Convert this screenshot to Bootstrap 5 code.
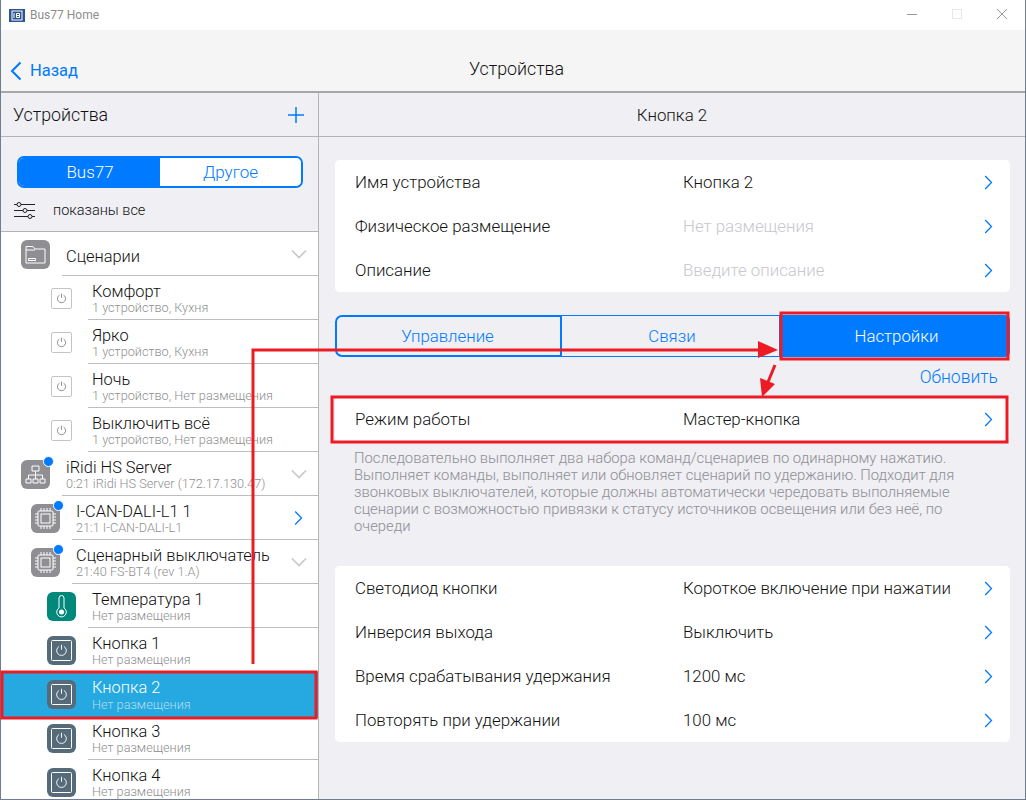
<!DOCTYPE html>
<html lang="ru">
<head>
    <meta charset="UTF-8">
    <title>Bus77 Home</title>
    <link rel="stylesheet" href="https://cdn.jsdelivr.net/npm/bootstrap@5.3.0/dist/css/bootstrap.min.css">
    <style>
        html, body { height: 800px; overflow: hidden; }
        body { font-family: Roboto, "Liberation Sans", sans-serif; font-weight: 300; color: #111; background: #efeff4; }
        .app-window { position: relative; height: 800px; border-left: 1px solid #6f7c91; border-right: 1px solid #6f7c91; border-bottom: 1px solid #6f7c91; }
        .title-bar { height: 30px; background: #fff; color: #8d8d8d; font-size: 12px; font-weight: 400; }
        .logo-box { width: 16px; height: 13px; margin-left: 8px; margin-right: 5px; margin-top: 1px; }
        .win-btns { margin-left: auto; padding-right: 17px; column-gap: 33px; }
        .win-btns svg { display: block; }
        .top-nav { height: 63px; background: #f5f5f5; border-bottom: 2px solid #a6a6a6; position: relative; font-size: 16.5px; font-weight: 400; }
        .back-link { color: #007aff; position: absolute; left: 9px; top: 29px; text-decoration: none; }
        .top-title { position: absolute; left: 7px; right: 0; top: 27px; text-align: center; font-size: 17.8px; font-weight: 300; line-height: 24px; }
        .side-pane { width: 318px; flex: none; border-right: 1px solid #b4b4b4; height: 706px; overflow: hidden; }
        .pane-head { height: 44px; border-bottom: 1px solid #b4b4b4; font-size: 17.8px; font-weight: 300; padding: 1px 14px 0 12px; }
        .seg-wrap { padding: 19px 15px 0 16px; }
        .seg-group { height: 32px; border: 2px solid #007aff; border-radius: 7px; overflow: hidden; background: #fff; }
        .seg-group .btn { border: 0; border-radius: 0; padding: 2px 0 0; font-size: 17px; font-weight: 300; color: #007aff; background: #fff; }
        .seg-group .btn.is-on { background: #007aff; color: #fff; flex: 0 0 142px; }
        .filter-row { height: 44px; border-bottom: 1px solid #b4b4b4; font-size: 14.5px; font-weight: 300; padding-left: 13px; padding-top: 2px; }
        .filter-row span { margin-left: 17px; }
        .tree { background: #fff; height: 567px; overflow: hidden; }
        .tree-row { height: 44px; position: relative; display: flex; align-items: center; }
        .tree-row .row-text { flex: 1; height: 44px; border-bottom: 1px solid #bdbdbd; padding-top: 4px; display: flex; flex-direction: column; justify-content: center; line-height: 1; }
        .row-name { font-size: 16.4px; font-weight: 300; }
        .row-name.is-lone { margin-top: 4px; }
        .row-sub { font-size: 12.7px; font-weight: 300; color: #8f8f8f; margin-top: 2px; }
        .lvl-0 { padding-left: 20px; }
        .lvl-0 .row-text { margin-left: 12px; padding-left: 4px; }
        .lvl-1 { padding-left: 30px; }
        .lvl-1 .row-text { margin-left: 12px; padding-left: 4px; }
        .lvl-2 { padding-left: 46px; }
        .lvl-2 .row-text { margin-left: 12px; padding-left: 4px; }
        .lvl-s { padding-left: 50px; }
        .lvl-s .row-text { margin-left: 16px; padding-left: 4px; }
        .tile { width: 29px; height: 29px; border-radius: 6px; background: #8e8e93; flex: none; position: relative; display: flex; align-items: center; justify-content: center; }
        .tile-teal { background: #00897b; }
        .tile-slate { background: #566b7a; }
        .tile-blank { width: 21px; height: 21px; border-radius: 2px; background: #fff; border: 1px solid #c4c4c4; }
        .dot-new { position: absolute; top: -4px; right: -4px; width: 9px; height: 9px; border-radius: 50%; background: #007aff; border: 1px solid #fff; box-sizing: content-box; }
        .chev-end { position: absolute; right: 11px; top: 50%; transform: translateY(-50%); }
        .tree-row.is-picked { background: #25a9e0; box-shadow: 0 2px 0 #25a9e0; z-index: 1; }
        .tree-row.is-picked .row-text { border-bottom: 0; }
        .tree-row.is-picked .row-name { color: #fff; }
        .tree-row.is-picked .row-sub { color: #b5dcef; }
        .main-pane { flex: 1; height: 706px; overflow: hidden; }
        .main-head { height: 44px; border-bottom: 1px solid #b4b4b4; font-size: 16.9px; font-weight: 300; padding-top: 3px; background: #efeff4; }
        .main-body { padding: 23px 15px 0 16px; }
        .set-list { border-radius: 5px; overflow: hidden; background: #fff; }
        .set-row { height: 44px; padding: 2px 0 0 20px; display: flex; align-items: center; font-size: 16.85px; font-weight: 300; position: relative; background: #fff; }
        .set-label { flex: 0 0 328px; }
        .set-value.is-empty { color: #c7c7cc; }
        .set-row svg { position: absolute; right: 17px; top: 15px; }
        .tab-group { margin-top: 23px; height: 42px; }
        .tab-group .btn { border-radius: 0; padding: 2px 0 0; font-size: 16.8px; font-weight: 300; color: #007aff; background: transparent; border: 1px solid #007aff; }
        .tab-group .tab-a { flex: 0 0 227px; border: 2px solid #007aff; border-radius: 7px 0 0 7px; padding-right: 2px; }
        .tab-group .tab-b { flex: 0 0 219px; border-left: 0; padding-left: 4px; }
        .tab-group .tab-c { flex: 1; background: #007aff; color: #fff; border-radius: 0 5px 5px 0; padding-left: 4px; }
        .refresh-row { height: 40px; text-align: right; padding: 9px 12px 0 0; color: #007aff; font-size: 17.5px; font-weight: 300; line-height: 22px; }
        .hint-text { margin: 9px 15px 0 19px; font-size: 14.8px; line-height: 17px; color: #8e8e93; height: 116px; font-weight: 300; }
        .marks { position: absolute; left: -1px; top: 0; width: 1026px; height: 800px; pointer-events: none; z-index: 5; }
    </style>
</head>
<body>
    <svg width="0" height="0" class="position-absolute">
        <defs>
            <symbol id="i-power" viewBox="0 0 14 14"><path d="M4.4 2.6a5.2 5.2 0 1 0 5.2 0M7 .8v5.4" fill="none" stroke="currentColor" stroke-width="1"/></symbol>
            <symbol id="i-down" viewBox="0 0 16 10"><path d="M1 1.500l7 7 7-7" fill="none" stroke="#c7c7cc" stroke-width="1.600"/></symbol>
            <symbol id="i-right" viewBox="0 0 9 15"><path d="M1.200 1l6.300 6.500-6.300 6.500" fill="none" stroke="#007aff" stroke-width="1.300"/></symbol>
            <symbol id="i-chip" viewBox="0 0 29 29"><g fill="none" stroke="#fff"><rect x="7" y="7" width="15" height="15" rx="1"/><rect x="10" y="10" width="9" height="9"/><path d="M10 4v3M13 4v3M16 4v3M19 4v3M10 22v3M13 22v3M16 22v3M19 22v3M4 10h3M4 13h3M4 16h3M4 19h3M22 10h3M22 13h3M22 16h3M22 19h3"/></g></symbol>
        </defs>
    </svg>

    <div class="app-window">
        <div class="title-bar d-flex align-items-center">
            <svg class="logo-box" viewBox="0 0 16 13"><rect width="16" height="13" fill="#2c5490"/><rect x="3" y="2" width="10" height="9" fill="none" stroke="#fff"/><path d="M5 4v5M7.500 4.500h3v4h-3zM7.500 6.500h3" fill="none" stroke="#fff"/></svg>
            <span>Bus77 Home</span>
            <div class="win-btns d-flex align-items-center">
                <svg width="12" height="12"><path d="M1 5.500h10" stroke="#999"/></svg>
                <svg width="12" height="12"><rect x="1.500" y=".5" width="9" height="9" fill="none" stroke="#e8e8e8"/></svg>
                <svg width="12" height="12"><path d="M1 0l10 10M11 0L1 10" stroke="#999"/></svg>
            </div>
        </div>
        <div class="top-nav">
            <a class="back-link d-flex align-items-center gap-2" href="#">
                <svg width="12" height="20" viewBox="0 0 12 20"><path d="M10.500 1.500L2 10l8.500 8.500" fill="none" stroke="#007aff" stroke-width="2"/></svg>
                <span>Назад</span>
            </a>
            <div class="top-title">Устройства</div>
        </div>

        <div class="d-flex">
            <!-- Sidebar -->
            <div class="side-pane">
                <div class="pane-head d-flex align-items-center justify-content-between">
                    <span>Устройства</span>
                    <svg width="16" height="16"><path d="M8 0v16M0 8h16" stroke="#007aff" stroke-width="1.500"/></svg>
                </div>
                <div class="seg-wrap">
                    <div class="btn-group seg-group d-flex">
                        <button class="btn is-on" type="button">Bus77</button>
                        <button class="btn" type="button">Другое</button>
                    </div>
                </div>
                <div class="filter-row d-flex align-items-center">
                    <svg width="22" height="20" viewBox="0 0 22 20"><g fill="none" stroke="#222"><path d="M0 3.500h3M7 3.500h14M0 9.500h9M13 9.500h8M0 15.500h14M18 15.500h3"/><circle cx="5" cy="3.500" r="2"/><circle cx="11" cy="9.500" r="2"/><circle cx="16" cy="15.500" r="2"/></g></svg>
                    <span>показаны все</span>
                </div>
                <div class="tree">
                    <div class="tree-row lvl-0">
                        <div class="tile"><svg width="21" height="19" viewBox="0 0 21 19"><path d="M1 18V1.500h7l2 2.500h10v14zM1 5h9M3.500 13.500h7v2h-7z" fill="none" stroke="#fff"/></svg></div>
                        <div class="row-text"><div class="row-name is-lone">Сценарии</div></div>
                        <svg class="chev-end" width="16" height="10"><use href="#i-down"/></svg>
                    </div>
                    <div class="tree-row lvl-s"><div class="tile-blank d-flex align-items-center justify-content-center text-secondary"><svg width="11" height="11"><use href="#i-power"/></svg></div><div class="row-text"><div class="row-name">Комфорт</div><div class="row-sub">1 устройство, Кухня</div></div></div>
                    <div class="tree-row lvl-s"><div class="tile-blank d-flex align-items-center justify-content-center text-secondary"><svg width="11" height="11"><use href="#i-power"/></svg></div><div class="row-text"><div class="row-name">Ярко</div><div class="row-sub">1 устройство, Кухня</div></div></div>
                    <div class="tree-row lvl-s"><div class="tile-blank d-flex align-items-center justify-content-center text-secondary"><svg width="11" height="11"><use href="#i-power"/></svg></div><div class="row-text"><div class="row-name">Ночь</div><div class="row-sub">1 устройство, Нет размещения</div></div></div>
                    <div class="tree-row lvl-s"><div class="tile-blank d-flex align-items-center justify-content-center text-secondary"><svg width="11" height="11"><use href="#i-power"/></svg></div><div class="row-text"><div class="row-name">Выключить всё</div><div class="row-sub">1 устройство, Нет размещения</div></div></div>
                    <div class="tree-row lvl-0">
                        <div class="tile"><svg width="21" height="21" viewBox="0 0 21 21"><path d="M7 2h7v5H7zM1 15h5v4H1zM8 15h5v4H8zM15 15h5v4h-5zM10.500 7v8M3.500 15v-4h14v4" fill="none" stroke="#fff"/></svg><span class="dot-new"></span></div>
                        <div class="row-text"><div class="row-name">iRidi HS Server</div><div class="row-sub">0:21 iRidi HS Server (172.17.130.47)</div></div>
                        <svg class="chev-end" width="16" height="10"><use href="#i-down"/></svg>
                    </div>
                    <div class="tree-row lvl-1">
                        <div class="tile"><svg width="29" height="29"><use href="#i-chip"/></svg><span class="dot-new"></span></div>
                        <div class="row-text"><div class="row-name">I-CAN-DALI-L1 1</div><div class="row-sub">21:1 I-CAN-DALI-L1</div></div>
                        <svg class="chev-end me-1" width="9" height="15"><use href="#i-right"/></svg>
                    </div>
                    <div class="tree-row lvl-1">
                        <div class="tile"><svg width="29" height="29"><use href="#i-chip"/></svg><span class="dot-new"></span></div>
                        <div class="row-text"><div class="row-name">Сценарный выключатель</div><div class="row-sub">21:40 FS-BT4 (rev 1.A)</div></div>
                        <svg class="chev-end" width="16" height="10"><use href="#i-down"/></svg>
                    </div>
                    <div class="tree-row lvl-2">
                        <div class="tile tile-teal"><svg width="13" height="23" viewBox="0 0 13 23"><path d="M4 13V3a2.500 2.500 0 0 1 5 0v10a4.800 4.800 0 1 1-5 0z" fill="none" stroke="#fff"/><circle cx="6.500" cy="17" r="2.500" fill="#fff"/></svg></div>
                        <div class="row-text"><div class="row-name">Температура 1</div><div class="row-sub">Нет размещения</div></div>
                    </div>
                    <div class="tree-row lvl-2">
                        <div class="tile tile-slate text-white"><svg width="21" height="21" viewBox="0 0 21 21"><rect x=".5" y=".5" width="20" height="20" rx="1" fill="none" stroke="#fff"/><svg x="4" y="4" width="13" height="13"><use href="#i-power"/></svg></svg></div>
                        <div class="row-text"><div class="row-name">Кнопка 1</div><div class="row-sub">Нет размещения</div></div>
                    </div>
                    <div class="tree-row lvl-2 is-picked">
                        <div class="tile tile-slate text-white"><svg width="21" height="21" viewBox="0 0 21 21"><rect x=".5" y=".5" width="20" height="20" rx="1" fill="none" stroke="#fff"/><svg x="4" y="4" width="13" height="13"><use href="#i-power"/></svg></svg></div>
                        <div class="row-text"><div class="row-name">Кнопка 2</div><div class="row-sub">Нет размещения</div></div>
                    </div>
                    <div class="tree-row lvl-2">
                        <div class="tile tile-slate text-white"><svg width="21" height="21" viewBox="0 0 21 21"><rect x=".5" y=".5" width="20" height="20" rx="1" fill="none" stroke="#fff"/><svg x="4" y="4" width="13" height="13"><use href="#i-power"/></svg></svg></div>
                        <div class="row-text"><div class="row-name">Кнопка 3</div><div class="row-sub">Нет размещения</div></div>
                    </div>
                    <div class="tree-row lvl-2">
                        <div class="tile tile-slate text-white"><svg width="21" height="21" viewBox="0 0 21 21"><rect x=".5" y=".5" width="20" height="20" rx="1" fill="none" stroke="#fff"/><svg x="4" y="4" width="13" height="13"><use href="#i-power"/></svg></svg></div>
                        <div class="row-text"><div class="row-name">Кнопка 4</div><div class="row-sub">Нет размещения</div></div>
                    </div>
                </div>
            </div>

            <!-- Main pane -->
            <div class="main-pane">
                <div class="main-head d-flex align-items-center justify-content-center">Кнопка 2</div>
                <div class="main-body">
                    <div class="set-list">
                        <div class="set-row"><div class="set-label">Имя устройства</div><div class="set-value">Кнопка 2</div><svg width="9" height="15"><use href="#i-right"/></svg></div>
                        <div class="set-row"><div class="set-label">Физическое размещение</div><div class="set-value is-empty">Нет размещения</div><svg width="9" height="15"><use href="#i-right"/></svg></div>
                        <div class="set-row"><div class="set-label">Описание</div><div class="set-value is-empty">Введите описание</div><svg width="9" height="15"><use href="#i-right"/></svg></div>
                    </div>
                    <div class="btn-group tab-group d-flex">
                        <button class="btn tab-a" type="button">Управление</button>
                        <button class="btn tab-b" type="button">Связи</button>
                        <button class="btn tab-c" type="button">Настройки</button>
                    </div>
                    <div class="refresh-row">Обновить</div>
                    <div class="set-list">
                        <div class="set-row"><div class="set-label">Режим работы</div><div class="set-value">Мастер-кнопка</div><svg width="9" height="15"><use href="#i-right"/></svg></div>
                    </div>
                    <div class="hint-text">Последовательно выполняет два набора команд/сценариев по одинарному нажатию. Выполняет команды, выполняет или обновляет сценарий по удержанию. Подходит для звонковых выключателей, которые должны автоматически чередовать выполняемые сценарии с возможностью привязки к статусу источников освещения или без неё, по очереди</div>
                    <div class="set-list">
                        <div class="set-row"><div class="set-label">Светодиод кнопки</div><div class="set-value">Короткое включение при нажатии</div><svg width="9" height="15"><use href="#i-right"/></svg></div>
                        <div class="set-row"><div class="set-label">Инверсия выхода</div><div class="set-value">Выключить</div><svg width="9" height="15"><use href="#i-right"/></svg></div>
                        <div class="set-row"><div class="set-label">Время срабатывания удержания</div><div class="set-value">1200 мс</div><svg width="9" height="15"><use href="#i-right"/></svg></div>
                        <div class="set-row"><div class="set-label">Повторять при удержании</div><div class="set-value">100 мс</div><svg width="9" height="15"><use href="#i-right"/></svg></div>
                    </div>
                </div>
            </div>
        </div>

        <!-- Red annotations over the screenshot -->
        <svg class="marks" viewBox="0 0 1026 800">
            <g fill="none" stroke="#ed1c24" stroke-width="3">
                <rect x="2" y="672" width="314" height="46"/>
                <rect x="781" y="313" width="227" height="46"/>
                <rect x="332" y="397" width="675" height="45"/>
                <path d="M253 664V350H760"/>
                <path d="M775 365L768 382"/>
            </g>
            <path d="M758 341L778 350L758 358zM760 378L775 384L762 397z" fill="#ed1c24"/>
        </svg>
    </div>
    <script src="https://cdn.jsdelivr.net/npm/bootstrap@5.3.0/dist/js/bootstrap.bundle.min.js"></script>
</body>
</html>
